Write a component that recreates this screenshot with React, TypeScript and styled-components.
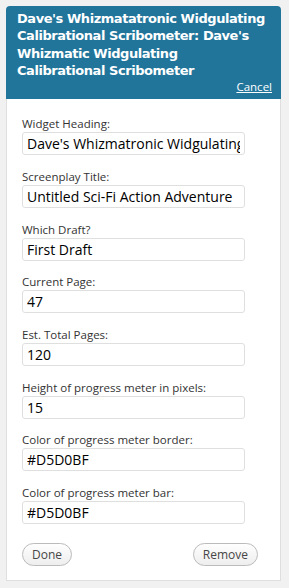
import styled, { createGlobalStyle } from "styled-components";

const GlobalStyle = createGlobalStyle`
  body {
    margin: 0;
    background: #f1f1f1;
    font-family: "Open Sans", "DejaVu Sans", sans-serif;
  }
`;

const Page = styled.div`
  padding: 6px 8px 7px 6px;
`;

const Header = styled.div`
  background: #21759b;
  border-radius: 4px 4px 0 0;
  padding: 4px 9px 5px 11px;
  color: #fff;
`;

const Title = styled.h3`
  margin: 0;
  font-family: "DejaVu Sans", Verdana, sans-serif;
  font-size: 13px;
  line-height: 17.3px;
  letter-spacing: -0.45px;
  font-weight: bold;
`;

const CancelRow = styled.div`
  display: flex;
  justify-content: flex-end;
  margin-top: 1px;
`;

const CancelLink = styled.a`
  color: #fff;
  font-size: 11.5px;
  line-height: 14px;
  text-decoration: underline;
  cursor: pointer;
`;

const Body = styled.div`
  background: #fff;
  border: 1px solid #dfdfdf;
  border-top: none;
  padding: 16px 35px 14px 15px;
`;

const Field = styled.div`
  display: flex;
  flex-direction: column;
  margin-bottom: 12.7px;
`;

const Label = styled.label`
  font-size: 11.5px;
  line-height: 17px;
  color: #333;
`;

const Input = styled.input`
  box-sizing: border-box;
  width: 223px;
  height: 23px;
  border: 1px solid #dfdfdf;
  border-radius: 3px;
  padding: 0 4px;
  font-family: "Open Sans", "DejaVu Sans", sans-serif;
  font-size: 14px;
  color: #000;
  background: #fff;
  outline: none;
`;

const Actions = styled.div`
  display: flex;
  justify-content: space-between;
  margin-top: 19px;
  width: 236px;
`;

const Button = styled.button`
  height: 23px;
  padding: 0 9px;
  border: 1px solid #bbb;
  border-radius: 12px;
  background: linear-gradient(#fefefe, #eeeeee);
  font-family: "Open Sans", "DejaVu Sans", sans-serif;
  font-size: 12px;
  color: #464646;
  cursor: pointer;
`;

const fields = [
  { label: "Widget Heading:", value: "Dave's Whizmatronic Widgulating Calibrational Scribometer" },
  { label: "Screenplay Title:", value: "Untitled Sci-Fi Action Adventure" },
  { label: "Which Draft?", value: "First Draft" },
  { label: "Current Page:", value: "47" },
  { label: "Est. Total Pages:", value: "120" },
  { label: "Height of progress meter in pixels:", value: "15" },
  { label: "Color of progress meter border:", value: "#D5D0BF" },
  { label: "Color of progress meter bar:", value: "#D5D0BF" },
];

const App = () => {
  return (
    <Page>
      <GlobalStyle />
      <Header>
        <Title>
          Dave's Whizmatatronic Widgulating Calibrational Scribometer: Dave's Whizmatic Widgulating
          <br />
          Calibrational Scribometer
        </Title>
        <CancelRow>
          <CancelLink>Cancel</CancelLink>
        </CancelRow>
      </Header>
      <Body>
        {fields.map((f) => (
          <Field key={f.label}>
            <Label>{f.label}</Label>
            <Input defaultValue={f.value} />
          </Field>
        ))}
        <Actions>
          <Button>Done</Button>
          <Button>Remove</Button>
        </Actions>
      </Body>
    </Page>
  );
};

export default App;
